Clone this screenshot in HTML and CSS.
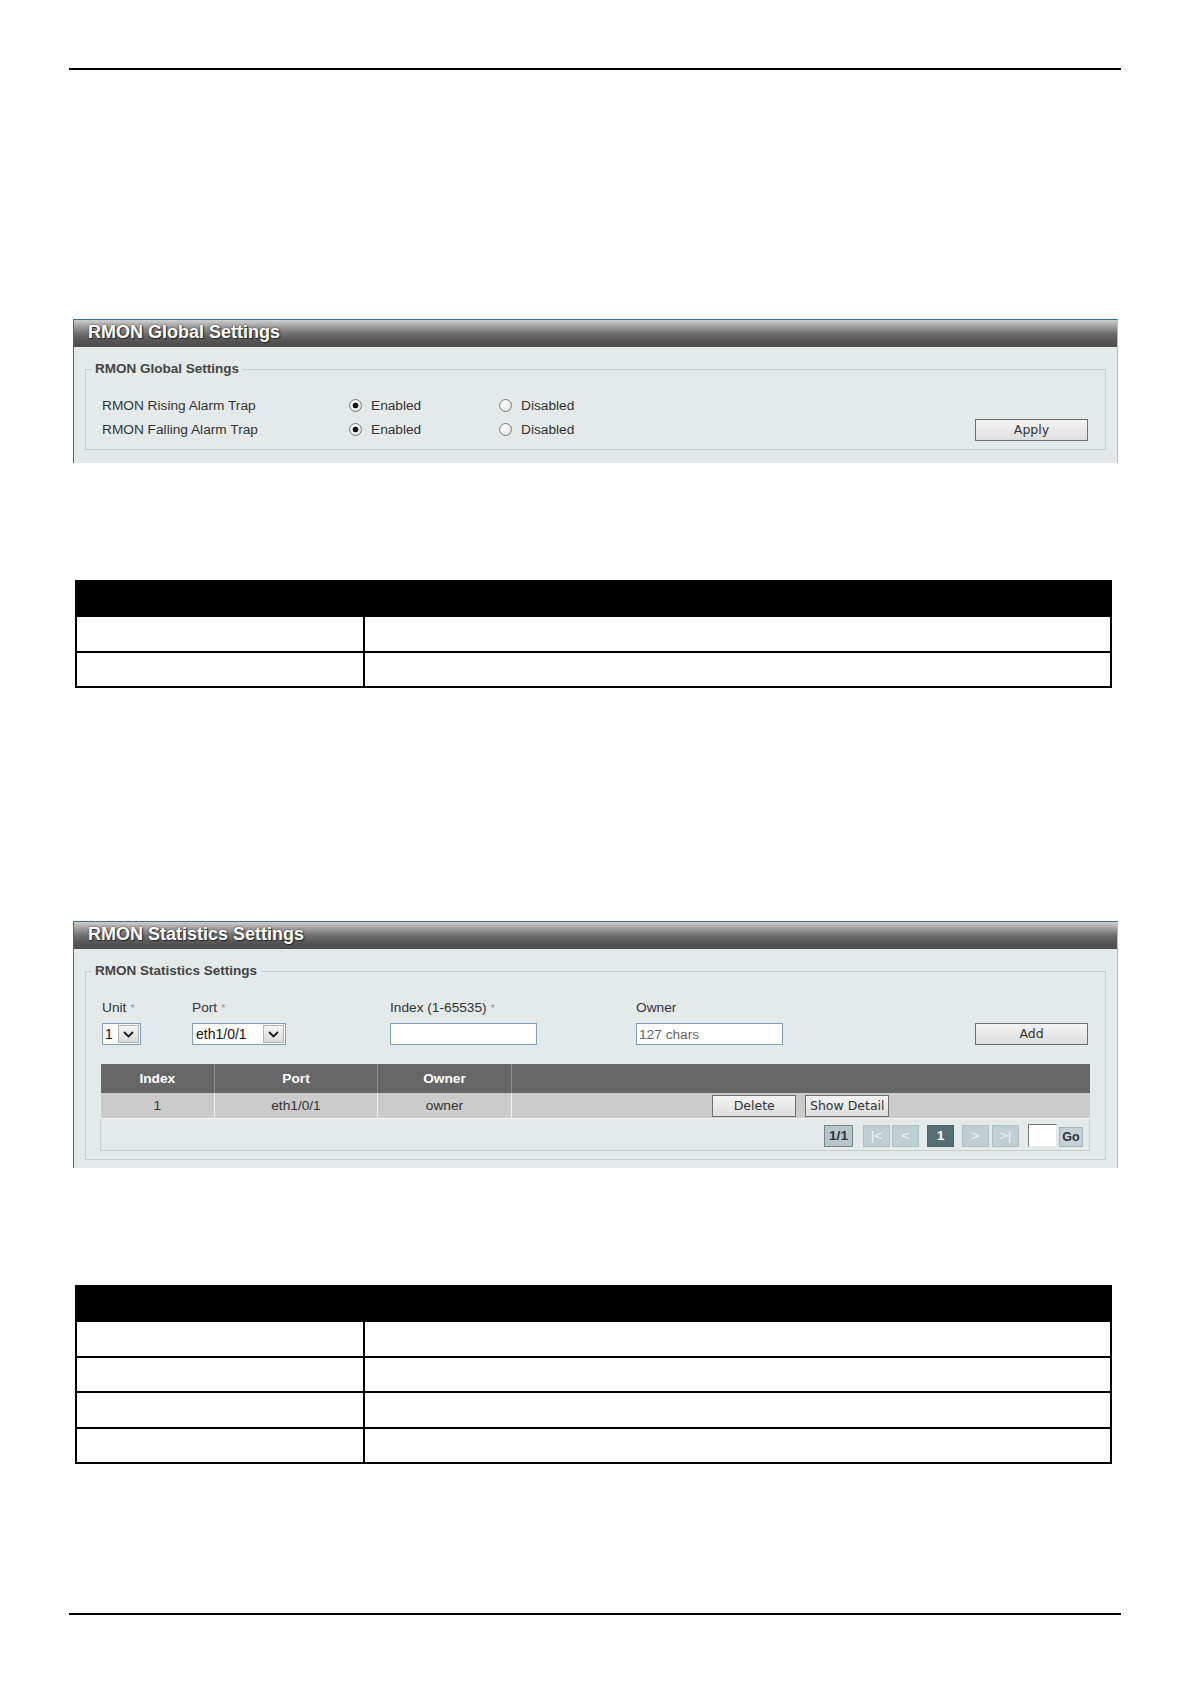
FILE: index.html
```html
<!DOCTYPE html>
<html lang="en">
<head>
<meta charset="utf-8">
<title>RMON Settings</title>
<link rel="stylesheet" href="styles.css">
</head>
<body>
<div class="page">
  <div class="rule"></div>

  <section class="panel panel-global">
    <div class="panel-head">RMON Global Settings</div>
    <div class="panel-body">
      <fieldset class="group">
        <legend>RMON Global Settings</legend>
        <div class="trap-grid">
          <span class="trap-label">RMON Rising Alarm Trap</span>
          <span class="opt"><span class="radio on"></span>Enabled</span>
          <span class="opt"><span class="radio"></span>Disabled</span>
          <span></span>
          <span class="trap-label">RMON Falling Alarm Trap</span>
          <span class="opt"><span class="radio on"></span>Enabled</span>
          <span class="opt"><span class="radio"></span>Disabled</span>
          <button class="btn btn-wide btn-apply" type="button">Apply</button>
        </div>
      </fieldset>
    </div>
  </section>

  <table class="doc-table doc-table-global">
    <tr class="doc-head"><th class="doc-c1"></th><th></th></tr>
    <tr><td></td><td></td></tr>
    <tr><td></td><td></td></tr>
  </table>

  <section class="panel panel-stats">
    <div class="panel-head">RMON Statistics Settings</div>
    <div class="panel-body">
      <fieldset class="group">
        <legend>RMON Statistics Settings</legend>
        <div class="form-row">
          <div class="field f-unit">
            <span class="flabel">Unit <span class="req">*</span></span>
            <span class="select s-unit"><span class="sel-text">1</span><span class="sel-arrow"><svg width="11" height="7" viewBox="0 0 11 7"><path d="M1 1 L5.5 5.5 L10 1" fill="none" stroke="#1a1a1a" stroke-width="1.8"/></svg></span></span>
          </div>
          <div class="field f-port">
            <span class="flabel">Port <span class="req">*</span></span>
            <span class="select s-port"><span class="sel-text">eth1/0/1</span><span class="sel-arrow"><svg width="11" height="7" viewBox="0 0 11 7"><path d="M1 1 L5.5 5.5 L10 1" fill="none" stroke="#1a1a1a" stroke-width="1.8"/></svg></span></span>
          </div>
          <div class="field f-index">
            <span class="flabel">Index (1-65535) <span class="req">*</span></span>
            <input class="text-in" type="text">
          </div>
          <div class="field f-owner">
            <span class="flabel">Owner</span>
            <input class="text-in" type="text" placeholder="127 chars">
          </div>
          <button class="btn btn-wide btn-add" type="button">Add</button>
        </div>

        <table class="grid">
          <colgroup>
            <col class="g-idx"><col class="g-port"><col class="g-owner"><col>
          </colgroup>
          <thead>
            <tr><th>Index</th><th>Port</th><th>Owner</th><th></th></tr>
          </thead>
          <tbody>
            <tr class="g-row">
              <td>1</td><td>eth1/0/1</td><td>owner</td>
              <td><div class="row-actions"><button class="btn btn-act" type="button">Delete</button><button class="btn btn-act" type="button">Show Detail</button></div></td>
            </tr>
            <tr class="g-pager">
              <td colspan="4">
                <div class="pager">
                  <span class="pg pg-count">1/1</span>
                  <span class="pg pg-off pg-first">|&lt;</span>
                  <span class="pg pg-off">&lt;</span>
                  <span class="pg pg-cur">1</span>
                  <span class="pg pg-off pg-next">&gt;</span>
                  <span class="pg pg-off">&gt;|</span>
                  <input class="pg-in" type="text">
                  <span class="pg pg-go">Go</span>
                </div>
              </td>
            </tr>
          </tbody>
        </table>
      </fieldset>
    </div>
  </section>

  <table class="doc-table doc-table-stats">
    <tr class="doc-head"><th class="doc-c1"></th><th></th></tr>
    <tr><td></td><td></td></tr>
    <tr><td></td><td></td></tr>
    <tr><td></td><td></td></tr>
    <tr><td></td><td></td></tr>
  </table>

  <div class="rule rule-bottom"></div>
</div>
</body>
</html>
```

FILE: styles.css
```css
html, body {
  margin: 0;
  padding: 0;
  background: #fff;
}

body {
  font-family: "Liberation Sans", Arial, sans-serif;
  color: #333;
}

.page {
  width: 1052px;
  margin-left: 69px;
  padding-top: 68px;
}

.rule {
  height: 2px;
  background: #000;
}

.rule-bottom {
  margin-top: 149px;
}

/* ---------- settings panel ---------- */
.panel {
  margin: 249px 3px 0 4px;
  background: #e3eae9;
  border-top: 1px solid #3f6d94;
  border-left: 1px solid #3f6d94;
  border-right: 1px solid #a9c3d8;
}

.panel-stats {
  margin-top: 233px;
}

.panel-head {
  height: 27px;
  line-height: 24px;
  padding-left: 14px;
  background: linear-gradient(#cfcfcf 0%, #a4a4a4 22%, #6f6f6f 50%, #565656 75%, #4c4c4c 100%);
  color: #fff;
  font-weight: bold;
  font-size: 18px;
  text-shadow: 0 0 2px #333, 1px 1px 1px #222;
}

.panel-body {
  padding: 14px 11px 13px 11px;
}

.panel-stats .panel-body {
  padding-bottom: 8px;
}

.group {
  margin: 0;
  padding: 0 0 8px 6px;
  border: 1px solid #c4d0d1;
  min-width: 0;
}

.group legend {
  padding: 0 3px;
  font-size: 13.5px;
  font-weight: bold;
  line-height: 16px;
  color: #444;
}

/* ---------- trap rows ---------- */
.trap-grid {
  display: grid;
  grid-template-columns: 248px 150px 1fr auto;
  grid-template-rows: 24px 24px;
  align-items: center;
  padding: 16px 17px 0 10px;
  font-size: 13.7px;
  color: #333;
}

.opt {
  display: inline-flex;
  align-items: center;
  gap: 9px;
  margin-left: -1px;
}

.radio {
  width: 13px;
  height: 13px;
  box-sizing: border-box;
  border-radius: 50%;
  border: 1px solid #7c7c7c;
  background: radial-gradient(circle at 40% 35%, #ffffff 0%, #ececec 55%, #d0d0d0 100%);
}

.radio.on {
  background:
    radial-gradient(circle, #111 0 2.6px, transparent 3.2px),
    radial-gradient(circle at 40% 35%, #ffffff 0%, #ececec 55%, #d0d0d0 100%);
}

/* ---------- buttons ---------- */
.btn {
  box-sizing: border-box;
  height: 22px;
  margin: 0;
  padding: 0;
  border: 1px solid #6f6f6f;
  background: linear-gradient(#f4f4f4, #dedede);
  font-family: "DejaVu Sans", Verdana, sans-serif;
  font-size: 12.5px;
  color: #333;
  line-height: 20px;
}

.btn-wide {
  width: 113px;
}

.btn-apply {
  margin-top: 2px;
}

/* ---------- statistics form ---------- */
.form-row {
  display: flex;
  align-items: flex-end;
  padding: 21px 17px 0 10px;
}

.field {
  display: flex;
  flex-direction: column;
  gap: 7px;
}

.f-unit { width: 90px; }
.f-port { width: 198px; }
.f-index { width: 246px; }
.f-owner { width: 147px; }

.btn-add {
  margin-left: auto;
}

.flabel {
  font-size: 13.7px;
  line-height: 16px;
  color: #333;
}

.req {
  color: #a0a0a0;
  font-size: 11px;
}

.select {
  box-sizing: border-box;
  height: 22px;
  display: flex;
  align-items: center;
  justify-content: space-between;
  border: 1px solid #7f9db9;
  background: #fff;
  font-size: 14px;
  color: #111;
  padding: 0 1px 0 2px;
}

.s-unit { width: 39px; }
.s-port { width: 94px; padding-left: 3px; }

.sel-arrow {
  box-sizing: border-box;
  width: 21px;
  height: 18px;
  display: flex;
  align-items: center;
  justify-content: center;
  border: 1px solid #b5b5b5;
  background: linear-gradient(#f3f3f3, #dcdcdc);
}

.text-in {
  box-sizing: border-box;
  width: 147px;
  height: 22px;
  margin: 0;
  padding: 0 2px;
  border: 1px solid #7f9db9;
  background: #fff;
  font-family: "Liberation Sans", Arial, sans-serif;
  font-size: 13.7px;
  color: #333;
  outline: none;
}

.text-in::placeholder {
  color: #666;
}

/* ---------- entry grid ---------- */
.grid {
  width: 990px;
  margin: 19px 0 0 8px;
  border-collapse: collapse;
  table-layout: fixed;
  font-size: 13.7px;
  text-align: center;
}

.grid th {
  height: 29px;
  padding: 0;
  background: #666;
  color: #fff;
  font-weight: bold;
  border-left: 1px solid #8c8c8c;
}

.grid th:first-child {
  border-left: none;
}

.g-idx { width: 114px; }
.g-port { width: 163px; }
.g-owner { width: 134px; }

.g-row td {
  height: 25px;
  padding: 0;
  background: #cbcbcb;
  color: #333;
  border-left: 1px solid #eef0f0;
  border-bottom: 1px solid #f4f6f6;
}

.g-row td:first-child {
  border-left: none;
}

.row-actions {
  display: flex;
  justify-content: center;
  gap: 9px;
}

.btn-act {
  width: 84px;
}

.g-pager td {
  height: 31px;
  padding: 0 6px 0 0;
  border: 1px solid #c4cfcf;
  border-top: none;
}

.pager {
  display: flex;
  justify-content: flex-end;
  align-items: flex-end;
  padding-top: 1px;
}

.pg {
  box-sizing: border-box;
  width: 27px;
  height: 22px;
  display: flex;
  align-items: center;
  justify-content: center;
  font-size: 13.7px;
  font-weight: bold;
}

.pg-count {
  width: 29px;
  margin-right: 10px;
  background: #b7c7c9;
  border: 1px solid #72878b;
  color: #333;
}

.pg-off {
  background: #bed0d2;
  border: 1px solid #acbfc1;
  color: #eef4f4;
  font-weight: normal;
  margin-right: 2px;
}

.pg-cur {
  margin: 0 8px 0 6px;
  background: #546e74;
  border: 1px solid #4b6469;
  color: #fff;
}

.pg-next {
  margin-right: 3px;
}

.pg-in {
  box-sizing: border-box;
  width: 29px;
  height: 23px;
  margin: 0 2px 0 7px;
  padding: 0;
  border: 1px solid;
  border-color: #7a7a7a #e8e8e8 #e8e8e8 #7a7a7a;
  background: #fff;
  outline: none;
}

.pg-go {
  width: 24px;
  height: 20px;
  background: #c4d3d5;
  border: 1px solid #a2b5b8;
  color: #333;
  font-size: 12.5px;
}

/* ---------- parameter tables ---------- */
.doc-table {
  width: 1037px;
  margin: 117px 0 0 6px;
  border-collapse: collapse;
  table-layout: fixed;
}

.doc-table th,
.doc-table td {
  border: 2px solid #000;
  padding: 0;
  height: 33.5px;
}

.doc-head th {
  background: #000;
  height: 33px;
}

.doc-c1 {
  width: 286px;
}
```
